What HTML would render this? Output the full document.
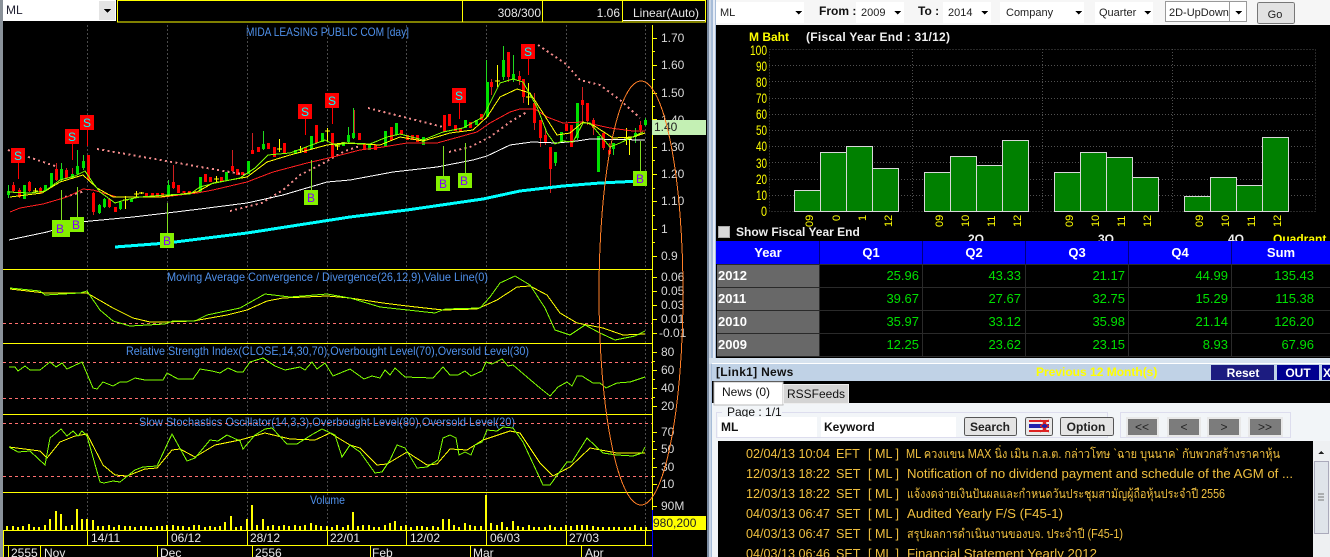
<!DOCTYPE html>
<html><head><meta charset="utf-8"><title>ML</title>
<style>
html,body{margin:0;padding:0;background:#000;width:1330px;height:557px;overflow:hidden}
svg{display:block;position:absolute;left:0;top:0}
text{font-family:"Liberation Sans","Noto Sans CJK JP",sans-serif;font-size:12px}
.ax{fill:#d8d8d8;font-size:12px}
.t{fill:#4f90ea;font-size:12px}
.w{fill:#e8e8e8;font-size:12px}
.y{fill:#ffff00}
.r{fill:#ffff00;font-size:11px}
.g{fill:#00e000;font-size:13px;text-anchor:end}
.h{fill:#fff;font-weight:bold;font-size:13px;text-anchor:middle}
.yr{fill:#fff;font-weight:bold;font-size:13px}
.n{fill:#f0c040;font-size:12.600px}
.c{fill:#222;font-size:11px}
.cy{fill:#00ffff;font-size:12px;text-anchor:middle}
.pu{fill:#8000ff;font-size:12px;text-anchor:middle}
.bt{fill:#222;font-size:12px;font-weight:bold;text-anchor:middle}
.yl{fill:#ffff00;font-size:14px;text-anchor:start}
</style></head><body>
<svg width="1330" height="557" viewBox="0 0 1330 557" shape-rendering="crispEdges">
<rect width="1330" height="557" fill="#000"/>
<rect x="0" y="0" width="3" height="557" fill="#8a929a"/>
<!-- top left -->
<rect x="3" y="0" width="113" height="21" fill="#fff"/>
<rect x="99" y="1" width="16" height="19" fill="#e4e4e4"/>
<path d="M104 9h7l-3.500 4z" fill="#000"/>
<text x="6" y="14" fill="#223" font-size="11">ML</text>
<path d="M117.500 .5H705.500V22H117.500ZM462.500 0V22M542.500 0V22M622.500 0V22" fill="none" stroke="#ffff00"/>
<path d="M623 20.500H705" stroke="#fff"/>
<text x="541" y="17" text-anchor="end" class="w">308/300</text>
<text x="620" y="17" text-anchor="end" class="w">1.06</text>
<text x="633" y="17" class="w">Linear(Auto)</text>
<text x="246" y="36" class="t" textLength="163" lengthAdjust="spacingAndGlyphs">MIDA LEASING PUBLIC COM [day]</text>

<!-- grid -->
<path d="M87.500 25V530M167.500 25V530M247.500 25V530M327.500 25V530M406.500 25V530M486.500 25V530M566.500 25V530M645.500 25V530" stroke="#4a4a4a" stroke-dasharray="2 2"/>
<!-- panel lines -->
<path d="M3 269.500H652M3 343.500H652M3 414.500H652M3 492.500H652M3 530.500H652M3 545.500H652" stroke="#ffff00"/>
<path d="M652.500 25V530" stroke="#ffff00"/>
<path d="M652.500 510V557" stroke="#0000ff"/>
<path d="M87.500 531V545M167.500 531V545M247.500 531V545M327.500 531V545M406.500 531V545M486.500 531V545M566.500 531V545M645.500 531V545M3.500 531V557M8.500 546V557M40.500 546V557M157.500 546V557M252.500 546V557M370.500 546V557M470.500 546V557M581.500 546V557" stroke="#ffff00"/>
<!-- axis ticks -->
<path d="M652 38.500h5M652 51.500h3M652 65.500h5M652 79.500h3M652 93.500h5M652 106.500h3M652 119.500h5M652 133.500h3M652 147.500h5M652 160.500h3M652 174.500h5M652 188.500h3M652 201.500h5M652 215.500h3M652 229.500h5M652 242.500h3M652 256.500h5M652 277.500h5M652 291.500h5M652 305.500h5M652 319.500h5M652 333.500h5M652 352.500h5M652 361.500h3M652 370.500h5M652 379.500h3M652 388.500h5M652 397.500h3M652 406.500h5M652 432.500h5M652 441.500h3M652 449.500h5M652 458.500h3M652 467.500h5M652 476.500h3M652 484.500h5M652 506.500h5" stroke="#ffff00"/>
<g>
<text x="661" y="42" class="ax">1.70</text><text x="661" y="69" class="ax">1.60</text><text x="661" y="97" class="ax">1.50</text><text x="661" y="124" class="ax">1.40</text><text x="661" y="151" class="ax">1.30</text><text x="661" y="178" class="ax">1.20</text><text x="661" y="205" class="ax">1.10</text><text x="661" y="233" class="ax">1</text><text x="661" y="260" class="ax">0.9</text>
<text x="661" y="281" class="ax">0.06</text><text x="661" y="295" class="ax">0.05</text><text x="661" y="309" class="ax">0.03</text><text x="661" y="323" class="ax">0.01</text><text x="659" y="337" class="ax">-0.01</text>
<text x="661" y="356" class="ax">80</text><text x="661" y="374" class="ax">60</text><text x="661" y="392" class="ax">40</text><text x="661" y="410" class="ax">20</text>
<text x="661" y="436" class="ax">70</text><text x="661" y="453" class="ax">50</text><text x="661" y="471" class="ax">30</text><text x="661" y="488" class="ax">10</text>
<text x="661" y="510" class="ax">90M</text>
</g>
<rect x="652" y="120" width="54" height="15" fill="#c4f0b4"/>
<text x="654" y="131" fill="#222" font-size="12">1.40</text>
<rect x="653" y="516" width="53" height="14" fill="#ffff00"/>
<text x="653" y="527" fill="#222" font-size="12">980,200</text>

<!-- candles wicks -->
<path d="M8.500 185V198M13.500 182V193M19.500 188V198M24.500 185V199M29.500 181V192M40.500 187V194M51.500 173V187M56.500 163V181M61.500 163V181M66.500 168V179M72.500 168V179M77.500 150V175M83.500 155V170M88.500 155V181M93.500 192V215M99.500 204V214M104.500 198V208M109.500 198V208M120.500 201V210M173.500 165V189M200.500 177V193M232.500 150V172M252.500 133V154M263.500 131V150M316.500 125V144M332.500 133V158M348.500 127V143M353.500 108V139M354.500 110V133M486.500 60V117M491.500 79V95M503.500 46V80M508.500 52V82M513.500 55V82M519.500 71V85M523.500 79V103M534.500 93V130M540.500 120V147M545.500 128V145M550.500 147V193M555.500 152V166M577.500 103V140M582.500 87V125M587.500 103V125M593.500 118V135M603.500 133V150M609.500 143V155M613.500 143V155M635.500 128V143M640.500 121V135" stroke="#d02020"/>
<path d="M8.500 185V198M24.500 185V199M51.500 173V187M61.500 163V181M77.500 150V175M83.500 155V170M99.500 204V214M104.500 198V208M120.500 201V210M168.500 180V197M200.500 177V193M263.500 131V150M348.500 127V143M353.500 108V139M486.500 60V117M503.500 46V80M513.500 55V82M555.500 152V166M577.500 103V140M613.500 143V155M635.500 128V143M645.500 118V126" stroke="#20d820"/>
<!-- doji -->
<path d="M35.500 188V193M33 191h5M125.500 196V209M123 200h5M136.500 191V197M134 194h5M141.500 192V194M139 193h5M216.500 176V182M214 179h5M279.500 139V152M277 149h5M300.500 146V153M298 150h5M327.500 128V142M325 131h5M337.500 143V150M335 146h5M497.500 65V87M495 81h5M528.500 83V105M526 97h5M626.500 128V145M624 138h5M629.500 137V155M627 139h5" stroke="#ffff00" fill="none"/>
<!-- red bodies -->
<path d="M13.500 185V191M19.500 190V197M29.500 182V191M40.500 188V193M56.500 169V180M66.500 170V178M88.500 155V180M93.500 193V212M109.500 199V207M115.500 207V212M146.500 193V197M152.500 193V197M157.500 193V197M162.500 193V197M173.500 182V188M178.500 185V193M184 191V193M189.500 191V193M194.500 191V193M205.500 174V182M210.500 177V182M221.500 177V182M232.500 166V171M237.500 169V175M242.500 172V175M252.500 150V154M258.500 147V152M268.500 143V149M274.500 147V157M284.500 143V154M305.500 147V153M316.500 125V143M332.500 133V157M359.500 133V140M364.500 143V150M375.500 145V150M391.500 127V140M401.500 130V135M407.500 135V140M412.500 135V140M417.500 135V142M444.500 115V132M449.500 114V126M455.500 125V131M460.500 128V132M470.500 122V128M481.500 114V120M491.500 82V87M508.500 52V77M519.500 76V80M523.500 79V97M534.500 103V123M540.500 120V138M545.500 135V143M550.500 147V169M566.500 124V131M571.500 125V147M582.500 100V105M587.500 103V121M593.500 120V128M603.500 133V148M609.500 150V154M640.500 125V130" stroke="#ff0000" stroke-width="3" fill="none"/>
<!-- green bodies -->
<path d="M8.500 191V195M24.500 185V199M45.500 185V191M51.500 173V187M61.500 169V180M72.500 174V178M77.500 166V174M83.500 161V168M99.500 205V213M104.500 199V207M120.500 202V209M131.500 199V202M168.500 185V196M200.500 177V192M226.500 172V180M248.500 161V174M263.500 144V149M295.500 150V154M311.500 136V149M322.500 133V142M343.500 142V146M348.500 135V142M353.500 133V138M369.500 145V150M385.500 131V147M396.500 123V135M423.500 137V145M465.500 120V128M476.500 120V125M487.500 82V117M503.500 60V77M513.500 74V80M555.500 152V163M561.500 132V142M577.500 103V138M598.500 136V172M613.500 143V149M635.500 133V137M645.500 120V125" stroke="#00e000" stroke-width="3" fill="none"/>
<!-- SAR dots -->
<g fill="none" stroke="#f08a8a" stroke-width="2" stroke-dasharray="2 3.300">
<polyline points="8,150 55,166"/>
<polyline points="65,197 85,191"/>
<polyline points="97,149 247,175"/>
<polyline points="230,211 262,203 283,190 300,175 320,165 345,151 360,146"/>
<polyline points="368,108 443,127"/>
<polyline points="449,152 470,147 490,137 510,122 527,112"/>
<polyline points="538,45 566,64 580,80 600,85 620,100 640,118"/>
</g>
<!-- MA lines -->
<polyline fill="none" stroke="#00ffff" stroke-width="3" points="115,247 167,243 247,233 350,217 407,210 483,199 520,191 563,186 600,183 640,181"/>
<polyline fill="none" stroke="#fff" stroke-width="1" points="9,240 47,232 80,222 133,217 167,213 200,209 247,203 283,195 327,182 350,180 393,172 437,167 473,160 487,156 510,145 532,142 557,143 577,141 590,139 645,140"/>
<polyline fill="none" stroke="#ff2020" stroke-width="1" points="10,212 20,208 43,204 67,197 83,189 93,190 117,197 163,197 197,193 213,190 247,182 273,172 307,163 333,157 360,150 383,147 407,143 437,143 477,132 490,123 510,112 520,109 535,109 547,117 563,123 583,122 610,128 633,131 645,131"/>
<polyline fill="none" stroke="#ffff00" stroke-width="1" points="10,197 42,193 60,182 83,175 97,188 113,197 160,197 197,192 213,183 247,177 267,162 290,155 327,145 343,143 380,145 400,137 423,141 450,133 473,130 487,117 500,97 517,89 530,93 543,113 557,135 570,133 583,122 593,125 613,138 633,137 645,133"/>
<polyline fill="none" stroke="#80ff00" stroke-width="1" points="8,192 30,193 45,191 60,180 75,176 85,171 93,183 100,192 115,203 125,200 140,197 165,195 190,194 200,187 215,183 240,178 255,168 268,155 290,153 325,140 335,145 350,143 370,144 387,137 400,134 423,140 443,132 463,128 483,117 500,83 513,79 523,82 537,107 547,133 555,144 563,141 573,142 583,123 590,123 610,147 620,143 643,132"/>
<!-- signal stems -->
<path d="M18.500 163V179M72.500 144V160M87.500 130V146M305.500 119V135M332.500 108V124M459.500 103V119M528.500 59V75" stroke="#ff0000"/>
<path d="M61.500 190V220M77.500 187V217M167.500 203V233M311.500 160V190M443.500 146V176M465.500 143V173M640.500 141V171" stroke="#80e020"/>
<g fill="#ff0000"><rect x="11" y="148" width="14" height="15"/><rect x="65" y="129" width="14" height="15"/><rect x="80" y="115" width="14" height="15"/><rect x="298" y="104" width="14" height="15"/><rect x="325" y="93" width="14" height="15"/><rect x="452" y="88" width="14" height="15"/><rect x="521" y="44" width="14" height="15"/></g>
<text x="18" y="160" class="cy">S</text><text x="72" y="141" class="cy">S</text><text x="87" y="127" class="cy">S</text><text x="305" y="116" class="cy">S</text><text x="332" y="105" class="cy">S</text><text x="459" y="100" class="cy">S</text><text x="528" y="56" class="cy">S</text>
<g fill="#84f000"><rect x="52" y="220" width="18" height="17"/><rect x="70" y="217" width="14" height="15"/><rect x="160" y="233" width="14" height="15"/><rect x="304" y="190" width="14" height="15"/><rect x="436" y="176" width="14" height="15"/><rect x="458" y="173" width="14" height="15"/><rect x="633" y="171" width="14" height="15"/></g>
<text x="60" y="233" class="pu">B</text><text x="76" y="229" class="pu">B</text><text x="167" y="245" class="pu">B</text><text x="311" y="202" class="pu">B</text><text x="443" y="188" class="pu">B</text><text x="464" y="185" class="pu">B</text><text x="640" y="183" class="pu">B</text>

<!-- titles -->
<text x="167" y="281" class="t" textLength="321" lengthAdjust="spacingAndGlyphs">Moving Average Convergence / Divergence(26,12,9),Value Line(0)</text>
<text x="126" y="355" class="t" textLength="403" lengthAdjust="spacingAndGlyphs">Relative Strength Index(CLOSE,14,30,70),Overbought Level(70),Oversold Level(30)</text>
<text x="139" y="426" class="t" textLength="376" lengthAdjust="spacingAndGlyphs">Slow Stochastics Oscillator(14,3,3),Overbought Level(80),Oversold Level(20)</text>
<text x="310" y="504" class="t" textLength="35" lengthAdjust="spacingAndGlyphs">Volume</text>
<!-- dashed levels -->
<path d="M3 323.500H652M3 362.500H652M3 398.500H652M3 423.500H652M3 476.500H652" stroke="#ff7070" stroke-dasharray="3 3"/>
<!-- MACD -->
<polyline fill="none" stroke="#ffff00" points="10,289 45,293 87,293 113,308 133,318 150,322 167,322 193,321 227,315 247,310 267,301 283,298 327,296 350,298 383,303 407,306 443,310 477,309 497,300 517,287 530,286 547,295 560,313 577,323 603,328 623,335 645,334"/>
<polyline fill="none" stroke="#80ff00" points="10,288 40,291 45,295 80,293 87,291 100,310 113,321 130,326 165,324 173,321 195,321 207,315 240,308 265,294 290,297 327,294 350,298 380,307 435,313 445,309 480,308 490,297 500,283 515,276 530,285 545,308 555,330 570,335 585,325 600,333 615,340 635,336 645,331"/>
<!-- RSI -->
<polyline fill="none" stroke="#80ff00" points="9,367 15,367 18,371 25,366 30,370 40,370 50,362 56,367 62,363 67,369 82,362 93,388 97,389 103,382 113,386 120,382 127,382 135,378 145,380 163,380 167,373 178,379 193,379 200,369 212,371 220,373 228,368 237,372 243,372 250,362 263,358 275,366 285,370 300,367 305,370 312,362 317,369 325,363 333,376 350,369 364,379 372,376 380,378 385,370 390,375 395,368 405,377 433,378 443,367 450,375 458,375 465,371 471,376 482,371 486,362 492,364 502,359 508,366 513,365 527,377 540,388 550,396 558,387 567,382 572,386 577,376 582,376 593,383 600,383 606,388 617,383 630,382 645,377"/>
<!-- Stoch -->
<polyline fill="none" stroke="#ffff00" points="9,447 40,451 47,458 60,442 75,436 87,434 103,465 115,475 127,476 145,469 157,468 172,450 180,449 195,457 215,445 240,440 265,433 290,439 315,440 330,433 350,445 360,448 377,465 387,464 407,452 427,465 437,464 450,449 467,450 483,440 510,431 520,433 540,463 553,476 570,467 590,448 617,453 645,453"/>
<polyline fill="none" stroke="#80ff00" points="9,447 18,452 30,451 45,465 50,438 61,429 67,436 73,431 78,436 82,431 87,436 100,482 104,483 113,481 120,482 135,470 143,467 157,466 172,434 187,461 195,458 210,440 218,441 227,435 240,441 243,449 255,435 265,429 272,428 287,444 297,444 313,434 322,429 335,435 342,457 350,445 360,452 375,473 382,472 390,460 397,445 405,448 417,468 427,467 438,460 443,438 450,435 456,438 459,455 465,452 471,455 475,445 482,442 487,430 497,431 503,427 513,428 523,442 543,485 550,485 567,462 572,462 587,438 603,453 617,455 633,456 642,453 645,447"/>
<!-- Volume -->
<path stroke="#ffff00" stroke-width="2" d="M7 530v-4M13 530v-4M18 530v-3M23 530v-4M29 530v-6M34 530v-3M39 530v-3M45 530v-5M50 530v-11M56 530v-19M61 530v-16M66 530v-4M72 530v-5M77 530v-21M82 530v-11M87 530v-11M93 530v-10M98 530v-4M103 530v-4M109 530v-5M114 530v-3M119 530v-5M125 530v-4M130 530v-4M135 530v-3M141 530v-4M146 530v-4M151 530v-3M157 530v-4M162 530v-4M167 530v-5M173 530v-5M178 530v-4M183 530v-4M189 530v-3M194 530v-5M199 530v-5M205 530v-3M210 530v-4M215 530v-3M220 530v-4M225 530v-8M231 530v-14M236 530v-3M241 530v-4M247 530v-11M252 530v-25M257 530v-5M263 530v-11M268 530v-4M273 530v-5M279 530v-4M284 530v-5M289 530v-4M295 530v-5M300 530v-4M305 530v-5M311 530v-7M316 530v-5M321 530v-4M327 530v-4M332 530v-3M337 530v-5M343 530v-3M348 530v-5M353 530v-18M358 530v-4M363 530v-5M369 530v-5M374 530v-3M379 530v-3M385 530v-5M390 530v-7M395 530v-9M401 530v-4M406 530v-5M411 530v-3M417 530v-4M422 530v-4M427 530v-3M433 530v-4M438 530v-3M443 530v-11M449 530v-11M454 530v-5M459 530v-3M465 530v-7M470 530v-5M475 530v-4M481 530v-4M486 530v-35M491 530v-7M497 530v-5M502 530v-8M507 530v-3M513 530v-9M518 530v-4M523 530v-3M529 530v-5M534 530v-3M539 530v-3M545 530v-3M550 530v-5M555 530v-3M561 530v-3M566 530v-5M571 530v-4M577 530v-5M582 530v-5M587 530v-5M593 530v-4M598 530v-3M603 530v-3M609 530v-3M614 530v-3M619 530v-3M625 530v-3M630 530v-3M635 530v-5M641 530v-3M646 530v-3"/>
<!-- date labels -->
<text x="91" y="542" class="w">14/11</text><text x="171" y="542" class="w">06/12</text><text x="250" y="542" class="w">28/12</text><text x="330" y="542" class="w">22/01</text><text x="410" y="542" class="w">12/02</text><text x="490" y="542" class="w">06/03</text><text x="569" y="542" class="w">27/03</text>
<text x="11" y="557" class="w">2555</text><text x="44" y="557" class="w">Nov</text><text x="160" y="557" class="w">Dec</text><text x="255" y="557" class="w">2556</text><text x="372" y="557" class="w">Feb</text><text x="473" y="557" class="w">Mar</text><text x="585" y="557" class="w">Apr</text>

<!-- right strip -->
<rect x="707" y="0" width="2" height="557" fill="#7a8ba0"/>
<rect x="709" y="0" width="2" height="557" fill="#c8d4e4"/>
<rect x="711" y="0" width="2" height="557" fill="#a6bcd8"/>
<rect x="713" y="0" width="2" height="557" fill="#e6ecf6"/>
<rect x="715" y="0" width="1" height="557" fill="#a6bcd8"/>
<!-- right top bar -->
<rect x="716" y="0" width="614" height="25" fill="#f6f6f6"/>
<rect x="716" y="2" width="88" height="21" fill="#fff"/>
<rect x="856" y="2" width="48" height="21" fill="#fff"/>
<rect x="943" y="2" width="48" height="21" fill="#fff"/>
<rect x="1000" y="2" width="84" height="21" fill="#fff"/>
<rect x="1095" y="2" width="58" height="21" fill="#fff"/>
<rect x="1165.500" y="1.500" width="81" height="20" fill="#fff" stroke="#999"/>
<path d="M1229.500 2V21" stroke="#999"/>
<path d="M795 11h7l-3.500 3.500zM894 11h7l-3.500 3.500zM981 11h7l-3.500 3.500zM1075 11h7l-3.500 3.500zM1144 11h7l-3.500 3.500zM1235 11h7l-3.500 3.500z" fill="#000"/>
<text x="720" y="16" class="c">ML</text>
<text x="819" y="15" fill="#111" font-size="12" font-weight="bold" style="font-weight:bold">From :</text>
<text x="861" y="16" class="c">2009</text>
<text x="918" y="15" fill="#111" style="font-weight:bold">To :</text>
<text x="948" y="16" class="c">2014</text>
<text x="1006" y="16" class="c">Company</text>
<text x="1099" y="16" class="c">Quarter</text>
<text x="1169" y="16" class="c">2D-UpDown</text>
<rect x="1257.500" y="2.500" width="37" height="21" rx="2" fill="#e2e2e2" stroke="#777"/>
<text x="1275" y="18" fill="#222" text-anchor="middle" class="c">Go</text>

<!-- bar chart -->
<text x="749" y="41" fill="#ffff00" style="font-weight:bold">M Baht</text>
<text x="806" y="41" fill="#f0f0f0" style="font-weight:bold" textLength="144">(Fiscal Year End : 31/12)</text>
<path d="M769.500 49.500H1315.500V211.500H769.500ZM769 65.500H1315M769 81.500H1315M769 98.500H1315M769 114.500H1315M769 130.500H1315M769 146.500H1315M769 162.500H1315M769 179.500H1315M769 195.500H1315M912.500 49V211M1042.500 49V211M1172.500 49V211" fill="none" stroke="#505050" stroke-dasharray="1 2"/>
<text x="750" y="55" class="yl" textLength="17" lengthAdjust="spacingAndGlyphs">100</text><text x="756" y="71" class="yl" textLength="11" lengthAdjust="spacingAndGlyphs">90</text><text x="756" y="87" class="yl" textLength="11" lengthAdjust="spacingAndGlyphs">80</text><text x="756" y="103" class="yl" textLength="11" lengthAdjust="spacingAndGlyphs">70</text><text x="756" y="119" class="yl" textLength="11" lengthAdjust="spacingAndGlyphs">60</text><text x="756" y="135" class="yl" textLength="11" lengthAdjust="spacingAndGlyphs">50</text><text x="756" y="151" class="yl" textLength="11" lengthAdjust="spacingAndGlyphs">40</text><text x="756" y="168" class="yl" textLength="11" lengthAdjust="spacingAndGlyphs">30</text><text x="756" y="184" class="yl" textLength="11" lengthAdjust="spacingAndGlyphs">20</text><text x="756" y="200" class="yl" textLength="11" lengthAdjust="spacingAndGlyphs">10</text><text x="761" y="216" class="yl" textLength="6" lengthAdjust="spacingAndGlyphs">0</text>
<g fill="#008000" stroke="#d8d8d8">
<rect x="794.500" y="190.500" width="26" height="21"/><rect x="820.500" y="152.500" width="26" height="59"/><rect x="846.500" y="146.500" width="26" height="65"/><rect x="872.500" y="168.500" width="26" height="43"/>
<rect x="924.500" y="172.500" width="26" height="39"/><rect x="950.500" y="156.500" width="26" height="55"/><rect x="976.500" y="165.500" width="26" height="46"/><rect x="1002.500" y="140.500" width="26" height="71"/>
<rect x="1054.500" y="172.500" width="26" height="39"/><rect x="1080.500" y="152.500" width="26" height="59"/><rect x="1106.500" y="157.500" width="26" height="54"/><rect x="1132.500" y="177.500" width="26" height="34"/>
<rect x="1184.500" y="196.500" width="26" height="15"/><rect x="1210.500" y="177.500" width="26" height="34"/><rect x="1236.500" y="185.500" width="26" height="26"/><rect x="1262.500" y="137.500" width="26" height="74"/>
</g>
<g>
<text transform="translate(813,227) rotate(-90)" class="r">09</text><text transform="translate(840,221) rotate(-90)" class="r">0</text><text transform="translate(866,221) rotate(-90)" class="r">1</text><text transform="translate(892,227) rotate(-90)" class="r">12</text>
<text transform="translate(943,227) rotate(-90)" class="r">09</text><text transform="translate(969,227) rotate(-90)" class="r">10</text><text transform="translate(995,227) rotate(-90)" class="r">11</text><text transform="translate(1021,227) rotate(-90)" class="r">12</text>
<text transform="translate(1073,227) rotate(-90)" class="r">09</text><text transform="translate(1099,227) rotate(-90)" class="r">10</text><text transform="translate(1125,227) rotate(-90)" class="r">11</text><text transform="translate(1151,227) rotate(-90)" class="r">12</text>
<text transform="translate(1203,227) rotate(-90)" class="r">09</text><text transform="translate(1229,227) rotate(-90)" class="r">10</text><text transform="translate(1255,227) rotate(-90)" class="r">11</text><text transform="translate(1281,227) rotate(-90)" class="r">12</text>
</g>
<rect x="718.500" y="226.500" width="11" height="11" fill="#d8d8d8" stroke="#aaa"/>
<text x="736" y="236" fill="#eee" style="font-weight:bold">Show Fiscal Year End</text>
<text x="968" y="243" fill="#eee" style="font-weight:bold">2Q</text>
<text x="1098" y="243" fill="#eee" style="font-weight:bold">3Q</text>
<text x="1228" y="243" fill="#eee" style="font-weight:bold">4Q</text>
<text x="1273" y="243" fill="#ffff00" style="font-weight:bold">Quadrant</text>

<!-- table -->
<rect x="716" y="241" width="614" height="23" fill="#0000ff"/>
<rect x="717" y="264" width="102" height="92" fill="#686868"/>
<path d="M819.500 264V357M922.500 264V357M1025.500 264V357M1128.500 264V357M1231.500 264V357" stroke="#2a2a2a"/>
<path d="M819.500 241V264M922.500 241V264M1025.500 241V264M1128.500 241V264M1231.500 241V264" stroke="#000080"/>
<path d="M717 264.500H1330M717 287.500H1330M717 310.500H1330M717 333.500H1330M717 356.500H1330" stroke="#2a2a2a"/>
<text x="768" y="257" class="h">Year</text><text x="871" y="257" class="h">Q1</text><text x="974" y="257" class="h">Q2</text><text x="1077" y="257" class="h">Q3</text><text x="1180" y="257" class="h">Q4</text><text x="1281" y="257" class="h">Sum</text>
<text x="718" y="280" class="yr">2012</text><text x="718" y="303" class="yr">2011</text><text x="718" y="326" class="yr">2010</text><text x="718" y="349" class="yr">2009</text>
<text x="919" y="280" class="g">25.96</text><text x="1021" y="280" class="g">43.33</text><text x="1125" y="280" class="g">21.17</text><text x="1228" y="280" class="g">44.99</text><text x="1314" y="280" class="g">135.43</text>
<text x="919" y="303" class="g">39.67</text><text x="1021" y="303" class="g">27.67</text><text x="1125" y="303" class="g">32.75</text><text x="1228" y="303" class="g">15.29</text><text x="1314" y="303" class="g">115.38</text>
<text x="919" y="326" class="g">35.97</text><text x="1021" y="326" class="g">33.12</text><text x="1125" y="326" class="g">35.98</text><text x="1228" y="326" class="g">21.14</text><text x="1314" y="326" class="g">126.20</text>
<text x="919" y="349" class="g">12.25</text><text x="1021" y="349" class="g">23.62</text><text x="1125" y="349" class="g">23.15</text><text x="1228" y="349" class="g">8.93</text><text x="1314" y="349" class="g">67.96</text>

<!-- news header -->
<rect x="709" y="358" width="621" height="6" fill="#d6e2ee"/>
<rect x="712" y="363" width="618" height="1" fill="#fff"/>
<rect x="712" y="364" width="618" height="17" fill="#c0d2e6"/>
<text x="716" y="376" fill="#111" style="font-weight:bold" letter-spacing=".3">[Link1] News</text>
<text x="1036" y="376" fill="#ffff00" style="font-weight:bold">Previous 12 Month(s)</text>
<rect x="1211" y="365" width="63" height="15" fill="#1c1c80"/>
<rect x="1277" y="365" width="42" height="15" fill="#000090"/>
<rect x="1322" y="365" width="8" height="15" fill="#000090"/>
<text x="1243" y="377" fill="#fff" style="font-weight:bold" text-anchor="middle">Reset</text>
<text x="1298" y="377" fill="#fff" style="font-weight:bold" text-anchor="middle">OUT</text>
<text x="1323" y="377" fill="#fff" style="font-weight:bold">X</text>
<!-- tabs -->
<rect x="712" y="381" width="618" height="22" fill="#000"/>
<rect x="712" y="403" width="618" height="154" fill="#f2f5f8"/>
<rect x="714" y="382" width="69" height="23" fill="#fff" stroke="#bbb"/>
<rect x="783.500" y="384.500" width="65" height="19" fill="#d4d4d4" stroke="#eee"/>
<text x="722" y="396" fill="#111">News (0)</text>
<text x="787" y="398" fill="#111">RSSFeeds</text>
<!-- search row -->
<rect x="716.500" y="412.500" width="391" height="25" fill="none" stroke="#dde"/>
<rect x="1120.500" y="412.500" width="170" height="25" fill="none" stroke="#dde"/>
<rect x="722" y="406" width="60" height="14" fill="#f2f5f8"/>
<text x="727" y="416" fill="#111">Page : 1/1</text>
<rect x="718" y="417" width="99" height="20" fill="#fff"/>
<rect x="821" y="417" width="135" height="20" fill="#fff"/>
<text x="721" y="431" fill="#111" style="font-weight:bold">ML</text>
<text x="824" y="431" fill="#111" style="font-weight:bold">Keyword</text>
<rect x="964.500" y="417.500" width="52" height="18" rx="2" fill="#e4e4e4" stroke="#555"/>
<text x="990" y="431" class="bt">Search</text>
<rect x="1025.500" y="417.500" width="27" height="18" rx="2" fill="#e8e8e8" stroke="#555"/>
<rect x="1029" y="420" width="20" height="2" fill="#d22"/><rect x="1029" y="422" width="20" height="2" fill="#eee"/><rect x="1029" y="424" width="20" height="4" fill="#22a"/><rect x="1029" y="428" width="20" height="2" fill="#eee"/><rect x="1029" y="430" width="20" height="2" fill="#d22"/>
<path d="M1040 420l9 6M1049 420l-9 6M1040 426l9 6M1049 426l-9 6" stroke="#d22"/>
<rect x="1060.500" y="417.500" width="53" height="18" rx="2" fill="#e4e4e4" stroke="#555"/>
<text x="1086" y="431" class="bt">Option</text>
<g fill="#7c7c7c" stroke="#e8e8e8" stroke-width="2"><rect x="1127" y="418" width="31" height="18"/><rect x="1168" y="418" width="32" height="18"/><rect x="1208" y="418" width="32" height="18"/><rect x="1249" y="418" width="33" height="18"/></g>
<text x="1142" y="431" fill="#222" text-anchor="middle">&lt;&lt;</text>
<text x="1184" y="431" fill="#222" text-anchor="middle">&lt;</text>
<text x="1224" y="431" fill="#222" text-anchor="middle">&gt;</text>
<text x="1265" y="431" fill="#222" text-anchor="middle">&gt;&gt;</text>
<!-- list -->
<rect x="718" y="441" width="595" height="116" fill="#000"/>
<rect x="1313" y="441" width="17" height="116" fill="#eef0f2"/>
<rect x="1314.500" y="461.500" width="14" height="72" fill="#dfe4ea" stroke="#aab"/>
<path d="M1318 454l3-3 3 3z" fill="#222"/>
<path d="M1318 494h6M1318 497h6M1318 500h6" stroke="#777"/>
<g>
<text x="746" y="458" class="n">02/04/13 10:04</text><text x="836" y="458" class="n">EFT</text><text x="868" y="458" class="n">[ ML ]</text><text x="906" y="458" class="n" textLength="374" lengthAdjust="spacingAndGlyphs">ML ควงแขน MAX นิ่ง เมิน ก.ล.ต. กล่าวโทษ `ฉาย บุนนาค` กับพวกสร้างราคาหุ้น</text>
<text x="746" y="478" class="n">12/03/13 18:22</text><text x="836" y="478" class="n">SET</text><text x="868" y="478" class="n">[ ML ]</text><text x="907" y="478" class="n" textLength="386" lengthAdjust="spacingAndGlyphs">Notification of no dividend payment and schedule of the AGM of ...</text>
<text x="746" y="498" class="n">12/03/13 18:22</text><text x="836" y="498" class="n">SET</text><text x="868" y="498" class="n">[ ML ]</text><text x="907" y="498" class="n" textLength="318" lengthAdjust="spacingAndGlyphs">แจ้งงดจ่ายเงินปันผลและกำหนดวันประชุมสามัญผู้ถือหุ้นประจำปี 2556</text>
<text x="746" y="518" class="n">04/03/13 06:47</text><text x="836" y="518" class="n">SET</text><text x="868" y="518" class="n">[ ML ]</text><text x="907" y="518" class="n" textLength="156" lengthAdjust="spacingAndGlyphs">Audited Yearly F/S (F45-1)</text>
<text x="746" y="538" class="n">04/03/13 06:47</text><text x="836" y="538" class="n">SET</text><text x="868" y="538" class="n">[ ML ]</text><text x="907" y="538" class="n" textLength="216" lengthAdjust="spacingAndGlyphs">สรุปผลการดำเนินงานของบจ. ประจำปี (F45-1)</text>
<text x="746" y="558" class="n">04/03/13 06:46</text><text x="836" y="558" class="n">SET</text><text x="868" y="558" class="n">[ ML ]</text><text x="907" y="558" class="n" textLength="190" lengthAdjust="spacingAndGlyphs">Financial Statement Yearly 2012</text>
</g>
<!-- orange ellipse -->
<ellipse cx="641" cy="293" rx="42" ry="212" fill="none" stroke="#ff7f27" stroke-width="1"/>
</svg>
</body></html>
